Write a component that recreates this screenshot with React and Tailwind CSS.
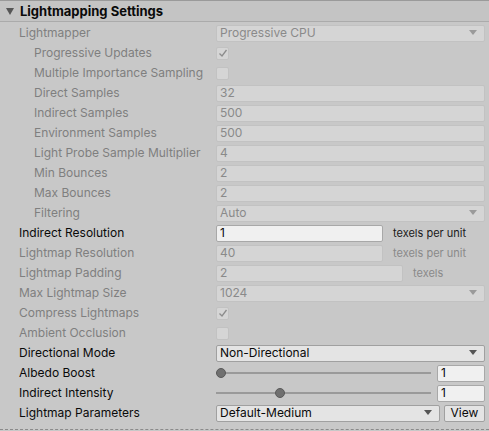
import React from "react";

const font = { fontFamily: "Inter, 'Noto Sans', sans-serif" };

function Arrow({ disabled }) {
  return (
    <svg width="8" height="6" viewBox="0 0 8 6" className="shrink-0">
      <path d="M0 0 L8 0 L4 5 Z" fill={disabled ? "#9a9a9a" : "#555"} />
    </svg>
  );
}

function Check() {
  return (
    <svg width="10" height="10" viewBox="0 0 10 10">
      <path d="M1.5 5.5 L4 8 L8.5 2" stroke="#8c8c8c" strokeWidth="1.3" fill="none" />
    </svg>
  );
}

function Label({ text, indent, disabled }) {
  return (
    <div
      className={`shrink-0 w-[216px] whitespace-nowrap leading-[16px] ${indent ? "pl-[34px]" : "pl-[19px]"} ${
        disabled ? "text-[#7f7f7f]" : "text-[#0a0a0a]"
      }`}
    >
      {text}
    </div>
  );
}

function DField({ value, w }) {
  return (
    <div
      className={`h-[17px] ${w || "flex-1"} rounded-[2px] border border-[#c2c2c2] bg-[#d5d5d5] pl-[3px] flex items-center text-[#8a8a8a]`}
    >
      {value}
    </div>
  );
}

function DDrop({ value }) {
  return (
    <div className="h-[17px] flex-1 rounded-[2px] border border-[#c2c2c2] bg-[#d5d5d5] pl-[3px] pr-[7px] flex items-center justify-between text-[#8a8a8a]">
      <span>{value}</span>
      <Arrow disabled />
    </div>
  );
}

function DCheck({ checked }) {
  return (
    <div className="w-[13px] h-[13px] rounded-[2px] border border-[#c2c2c2] bg-[#d5d5d5] flex items-center justify-center">
      {checked && <Check />}
    </div>
  );
}

function Row({ children }) {
  return <div className="h-[20px] flex items-center pr-[4px]">{children}</div>;
}

function Slider({ pos }) {
  return (
    <div className="flex-1 flex items-center gap-[6px]">
      <div className="relative flex-1 h-[18px] flex items-center">
        <div className="w-full h-[2px] bg-[#9a9a9a]" />
        <div
          className="absolute w-[10px] h-[10px] rounded-full bg-[#707070] border border-[#5a5a5a]"
          style={{ left: pos }}
        />
      </div>
      <div className="w-[48px] h-[17px] rounded-[2px] border border-[#a8a8a8] bg-[#f0f0f0] pl-[3px] flex items-center text-[#0a0a0a]">
        1
      </div>
    </div>
  );
}

export default function App() {
  return (
    <div className="w-[489px] h-[431px] bg-[#c8c8c8] text-[12px] leading-[16px] overflow-hidden" style={font}>
      <div className="h-[22px] bg-[#c4c4c4] border-t border-[#9a9a9a] border-b border-b-[#ababab] flex items-center">
        <svg width="8" height="7" viewBox="0 0 8 7" className="ml-[6px] mr-[6px]">
          <path d="M0 0 L8 0 L4 7 Z" fill="#565656" />
        </svg>
        <span className="font-bold text-[13px] text-[#0a0a0a]">Lightmapping Settings</span>
      </div>
      <div className="pt-[1px]">
        <Row>
          <Label text="Lightmapper" disabled />
          <DDrop value="Progressive CPU" />
        </Row>
        <Row>
          <Label text="Progressive Updates" indent disabled />
          <DCheck checked />
        </Row>
        <Row>
          <Label text="Multiple Importance Sampling" indent disabled />
          <DCheck />
        </Row>
        <Row>
          <Label text="Direct Samples" indent disabled />
          <DField value="32" />
        </Row>
        <Row>
          <Label text="Indirect Samples" indent disabled />
          <DField value="500" />
        </Row>
        <Row>
          <Label text="Environment Samples" indent disabled />
          <DField value="500" />
        </Row>
        <Row>
          <Label text="Light Probe Sample Multiplier" indent disabled />
          <DField value="4" />
        </Row>
        <Row>
          <Label text="Min Bounces" indent disabled />
          <DField value="2" />
        </Row>
        <Row>
          <Label text="Max Bounces" indent disabled />
          <DField value="2" />
        </Row>
        <Row>
          <Label text="Filtering" indent disabled />
          <DDrop value="Auto" />
        </Row>
        <Row>
          <Label text="Indirect Resolution" />
          <div className="w-[167px] h-[17px] rounded-[2px] border border-[#a8a8a8] bg-[#f0f0f0] pl-[3px] flex items-center text-[#0a0a0a]">
            1
          </div>
          <span className="ml-[10px] text-[11px] text-[#1a1a1a]">texels per unit</span>
        </Row>
        <Row>
          <Label text="Lightmap Resolution" disabled />
          <DField value="40" w="w-[167px]" />
          <span className="ml-[10px] text-[11px] text-[#8a8a8a]">texels per unit</span>
        </Row>
        <Row>
          <Label text="Lightmap Padding" disabled />
          <DField value="2" w="w-[187px]" />
          <span className="ml-[10px] text-[11px] text-[#8a8a8a]">texels</span>
        </Row>
        <Row>
          <Label text="Max Lightmap Size" disabled />
          <DDrop value="1024" />
        </Row>
        <Row>
          <Label text="Compress Lightmaps" disabled />
          <DCheck checked />
        </Row>
        <Row>
          <Label text="Ambient Occlusion" disabled />
          <DCheck />
        </Row>
        <Row>
          <Label text="Directional Mode" />
          <div className="h-[17px] flex-1 rounded-[2px] border border-[#a0a0a0] bg-[#e4e4e4] pl-[3px] pr-[7px] flex items-center justify-between text-[#0a0a0a]">
            <span>Non-Directional</span>
            <Arrow />
          </div>
        </Row>
        <Row>
          <Label text="Albedo Boost" />
          <Slider pos="0px" />
        </Row>
        <Row>
          <Label text="Indirect Intensity" />
          <Slider pos="59px" />
        </Row>
        <Row>
          <Label text="Lightmap Parameters" />
          <div className="h-[17px] flex-1 rounded-[2px] border border-[#a0a0a0] bg-[#e4e4e4] pl-[3px] pr-[7px] flex items-center justify-between text-[#0a0a0a]">
            <span>Default-Medium</span>
            <Arrow />
          </div>
          <div className="ml-[4px] w-[41px] h-[17px] rounded-[2px] border border-[#a0a0a0] bg-[#e4e4e4] flex items-center justify-center text-[#0a0a0a]">
            View
          </div>
        </Row>
      </div>
      <div className="mt-[6px] border-b border-dashed border-[#8a8a8a]" />
    </div>
  );
}
